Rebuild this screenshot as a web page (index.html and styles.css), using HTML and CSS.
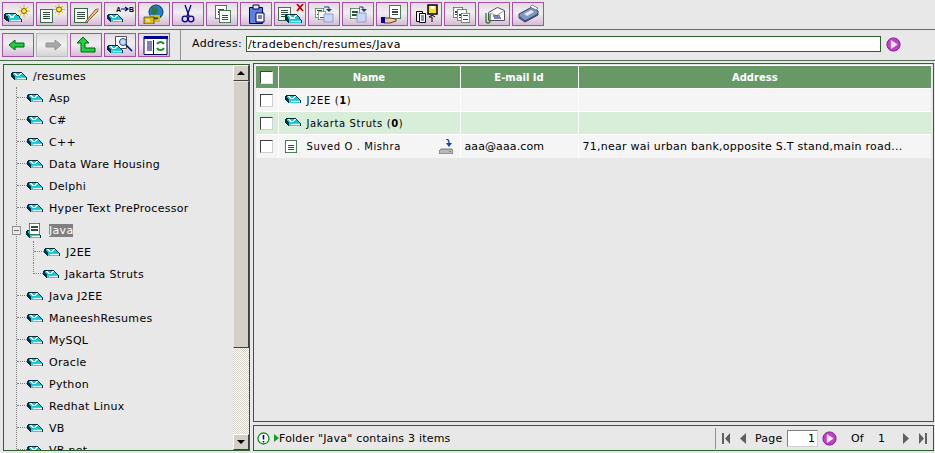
FILE: index.html
```html
<!DOCTYPE html>
<html lang="en">
<head>
    <meta charset="UTF-8">
    <title>Resumes - Java</title>
    <link rel="stylesheet" href="styles.css">
</head>
<body>
    <svg class="defs" width="0" height="0">
        <defs>
            <symbol id="tray" viewBox="0 0 16 10" shape-rendering="crispEdges">
                <path d="M1 1h10v1h1v1h1v1h1v1h1v1h1v3H4V9H3V8H2V7H1V6H0V2h1z" fill="#00303c"/>
                <path d="M2 2h9v1h1v1h1v1h1v1H4V5H3V4H2z" fill="#15c4da"/>
                <path d="M3 2h2v1h1v1h2V3h1V2h2v1h-1v1H9v1H5V4H4V3H3z" fill="#eaffff"/>
                <path d="M4 6h11v3H4z" fill="#2fd0e2"/>
                <path d="M6 7h9v1H6z" fill="#eaffff"/>
            </symbol>
            <symbol id="doc" viewBox="0 0 14 15" shape-rendering="crispEdges">
                <path d="M.5.5h13v14H.5z" fill="#fff" stroke="#2f6b3a"/>
                <path d="M3 4h8v1H3zM3 6h8v1H3zM3 8h8v1H3zM3 10h8v1H3z" fill="#2f4f3a"/>
            </symbol>
            <symbol id="go" viewBox="0 0 15 15">
                <circle cx="7.5" cy="7.5" r="6.6" fill="#c040c8" stroke="#802090"/>
                <path d="M5.2 3.6l6 3.9-6 3.9z" fill="#f4e8f8" stroke="#fff" stroke-width=".6"/>
            </symbol>
        </defs>
    </svg>

    <div class="toolbar">
        <button class="tool"><svg width="28" height="20" viewBox="0 0 28 20"><use href="#tray" x="0" y="8" width="18" height="11"/><path d="M20 1v12M14 7h12M16 3l8 8M24 3l-8 8" stroke="#e8b800"/><circle cx="20" cy="7" r="2.5" fill="#ffe840" stroke="#806000"/></svg></button>
        <button class="tool"><svg width="28" height="20" viewBox="0 0 28 20"><use href="#doc" x="2" y="4" width="13" height="15"/><path d="M21 0v11M15 5.500h12M17 2l8 7M25 2l-8 7" stroke="#e8b800"/><circle cx="21" cy="5.500" r="2.500" fill="#ffe840" stroke="#806000"/></svg></button>
        <button class="tool"><svg width="28" height="20" viewBox="0 0 28 20"><use href="#doc" x="2" y="3" width="14" height="16"/><path d="M14 17l-1 2 2-1 11-11-2-2z" fill="#f8c070" stroke="#806040"/><path d="M24 5l2 2 1-2-1-1z" fill="#e88080"/></svg></button>
        <button class="tool"><svg width="28" height="20" viewBox="0 0 28 20"><use href="#tray" x="0" y="9" width="17" height="10"/><text x="10" y="8" class="ab">A</text><path d="M15 5h6M19 3l3 2-3 2" fill="none" stroke="#000080" stroke-width="1.200"/><text x="23" y="8" class="ab">B</text></svg></button>
        <button class="tool"><svg width="28" height="20" viewBox="0 0 28 20"><circle cx="16" cy="8" r="7" fill="#2080d0" stroke="#103060"/><path d="M12 3l5 1 1 4-4 3-3-2z" fill="#2f7a30"/><path d="M5 14h8v5H5zM11 12h8v5h-8z" fill="none" stroke="#d8c000" stroke-width="1.800"/><path d="M4 13h10v7H4z" fill="none" stroke="#000" stroke-width=".5"/></svg></button>
        <button class="tool"><svg width="28" height="20" viewBox="0 0 28 20"><path d="M11 1l4 11M17 1l-4 11" stroke="#000090" stroke-width="1.300"/><circle cx="11" cy="15" r="2.800" fill="none" stroke="#000090" stroke-width="1.300"/><circle cx="17" cy="15" r="2.800" fill="none" stroke="#000090" stroke-width="1.300"/></svg></button>
        <button class="tool"><svg width="28" height="20" viewBox="0 0 28 20"><use href="#doc" x="7" y="1" width="12" height="14"/><use href="#doc" x="11" y="5" width="12" height="15"/></svg></button>
        <button class="tool"><svg width="28" height="20" viewBox="0 0 28 20"><path d="M7.500 3.500h13v16h-13z" fill="#6080e0" stroke="#000060"/><path d="M11 1h6v4h-6z" fill="#e8e8e8" stroke="#000060"/><path d="M14 9h8v9h-8z" fill="#fff" stroke="#000060"/><path d="M16 12h4M16 14h4" stroke="#000060"/></svg></button>
        <button class="tool"><svg width="28" height="20" viewBox="0 0 28 20"><use href="#doc" x="2" y="2" width="13" height="15"/><path d="M21 0l6 7M27 0l-6 7" stroke="#c00000" stroke-width="1.800"/><use href="#tray" x="9" y="9" width="17" height="11"/></svg></button>
        <button class="tool"><svg width="28" height="20" viewBox="0 0 28 20"><use href="#doc" x="5" y="3" width="9" height="11"/><use href="#doc" x="8" y="6" width="8" height="11"/><path d="M14 10h9v8h-9z" fill="#c8d8f8" stroke="#90a0c8"/><path d="M14 3h5v3" fill="none" stroke="#104080"/><path d="M16 5h6l-3 3z" fill="#104080"/></svg></button>
        <button class="tool"><svg width="28" height="20" viewBox="0 0 28 20"><use href="#doc" x="6" y="3" width="10" height="13"/><path d="M13 9h9v9h-9z" fill="#c8d8f8" stroke="#90a0c8"/><path d="M15 3h4v3" fill="none" stroke="#104080"/><path d="M17 5h6l-3 3z" fill="#104080"/></svg></button>
        <button class="tool"><svg width="28" height="20" viewBox="0 0 28 20"><use href="#doc" x="11" y="1" width="12" height="14"/><path d="M6 14h6l6 1v2l-6 2H6z" fill="#f0c8a0" stroke="#604020"/><path d="M3 13h4v6H3z" fill="#0000a0"/></svg></button>
        <button class="tool"><svg width="28" height="20" viewBox="0 0 28 20"><path d="M4.500 7.500h6v10h-6z" fill="#fff" stroke="#000"/><path d="M7.500 9.500h6v9h-6z" fill="#fff" stroke="#000"/><path d="M9 12h3M9 14h3M9 16h3" stroke="#003090"/><path d="M16 1h9v9h-9z" fill="#f8e000" stroke="#000" stroke-width="1.500"/><path d="M18.500 2h4v3h-4z" fill="#fff"/><path d="M20 18v-5h-3l3-2 3 2" fill="none" stroke="#000"/></svg></button>
        <button class="tool"><svg width="28" height="20" viewBox="0 0 28 20"><use href="#doc" x="7" y="2" width="10" height="12"/><use href="#doc" x="11" y="5" width="10" height="12"/><use href="#doc" x="15" y="8" width="9" height="11"/></svg></button>
        <button class="tool"><svg width="28" height="20" viewBox="0 0 28 20"><path d="M8.500 8.500l9-5 7 3v10h-16z" fill="#fff" stroke="#505050"/><path d="M8.500 8.500l8 3 8-5" fill="none" stroke="#a0a0a0"/><path d="M13 12h7M14 14h7" stroke="#000090"/><path d="M6 9v8a2 2 0 0 0 4 0v-7" fill="none" stroke="#2f7a30" stroke-width="1.300"/></svg></button>
        <button class="tool"><svg width="28" height="20" viewBox="0 0 28 20"><path d="M5 10l13-7 6 4v4l-13 7-6-4z" fill="#8098c0" stroke="#304060"/><path d="M10 10l7-4 3 2-7 4z" fill="#e0e8f8"/><path d="M18 1l6 3-2 2-6-3z" fill="#fff" stroke="#304060" stroke-width=".6"/><path d="M6 13l5 4 13-7" fill="none" stroke="#304060"/></svg></button>
    </div>

    <div class="navbar">
        <div class="nav-buttons">
            <button class="tool"><svg width="28" height="20" viewBox="0 0 28 20"><path d="M5 10l6-5v3h9v4h-9v3z" fill="#20d040" stroke="#006010"/></svg></button>
            <button class="tool disabled"><svg width="28" height="20" viewBox="0 0 28 20"><path d="M23 10l-6-5v3H8v4h9v3z" fill="#a8a8a8" stroke="#909090"/></svg></button>
            <button class="tool"><svg width="28" height="20" viewBox="0 0 28 20"><path d="M11 2l-6 6h4v9h14v-4H13V8h4z" fill="#20d040" stroke="#006010"/></svg></button>
            <button class="tool"><svg width="28" height="20" viewBox="0 0 28 20"><path d="M9.500 1.500h11v12h-11z" fill="#fff" stroke="#505050"/><use href="#tray" x="0" y="9" width="17" height="10"/><circle cx="17" cy="7" r="3.500" fill="#c0e0f8" stroke="#204080"/><path d="M20 10l6 6" stroke="#000090" stroke-width="1.500"/></svg></button>
            <button class="tool"><svg width="28" height="20" viewBox="0 0 28 20"><path d="M4 1.500h23v18H4z" fill="#fff" stroke="#000060"/><path d="M4 1h24v3H4z" fill="#000090"/><path d="M7 7h5M7 9h5M7 11h5M7 13h5M7 15h5" stroke="#000090"/><path d="M13.500 5v14" stroke="#000090"/><path d="M17 9a4 4 0 0 1 7 0M24 13a4 4 0 0 1-7 0" fill="none" stroke="#109020" stroke-width="2"/></svg></button>
        </div>
        <div class="address">
            <label>Address:</label>
            <input class="address-input" type="text" value="/tradebench/resumes/Java">
            <svg class="go" width="15" height="15"><use href="#go"/></svg>
        </div>
    </div>

    <div class="main">
        <div class="tree-panel">
            <div class="tree">
                <div class="row root"><svg class="tray" width="16" height="10"><use href="#tray"/></svg><span>/resumes</span></div>
                <ul>
                    <li><div class="row"><i class="branch"></i><svg class="tray" width="16" height="10"><use href="#tray"/></svg><span>Asp</span></div></li>
                    <li><div class="row"><i class="branch"></i><svg class="tray" width="16" height="10"><use href="#tray"/></svg><span>C#</span></div></li>
                    <li><div class="row"><i class="branch"></i><svg class="tray" width="16" height="10"><use href="#tray"/></svg><span>C++</span></div></li>
                    <li><div class="row"><i class="branch"></i><svg class="tray" width="16" height="10"><use href="#tray"/></svg><span>Data Ware Housing</span></div></li>
                    <li><div class="row"><i class="branch"></i><svg class="tray" width="16" height="10"><use href="#tray"/></svg><span>Delphi</span></div></li>
                    <li><div class="row"><i class="branch"></i><svg class="tray" width="16" height="10"><use href="#tray"/></svg><span>Hyper Text PreProcessor</span></div></li>
                    <li>
                        <div class="row">
                            <i class="expander"></i>
                            <svg class="open-folder" width="16" height="17" viewBox="0 0 16 17"><use href="#tray" x="0" y="7" width="15" height="10"/><use href="#doc" x="3" y="0" width="11" height="13"/></svg>
                            <span class="selected">Java</span>
                        </div>
                        <ul class="sub">
                            <li><div class="row"><i class="branch"></i><svg class="tray" width="16" height="10"><use href="#tray"/></svg><span>J2EE</span></div></li>
                            <li><div class="row"><i class="branch"></i><svg class="tray" width="16" height="10"><use href="#tray"/></svg><span>Jakarta Struts</span></div></li>
                        </ul>
                    </li>
                    <li><div class="row"><i class="branch"></i><svg class="tray" width="16" height="10"><use href="#tray"/></svg><span>Java J2EE</span></div></li>
                    <li><div class="row"><i class="branch"></i><svg class="tray" width="16" height="10"><use href="#tray"/></svg><span>ManeeshResumes</span></div></li>
                    <li><div class="row"><i class="branch"></i><svg class="tray" width="16" height="10"><use href="#tray"/></svg><span>MySQL</span></div></li>
                    <li><div class="row"><i class="branch"></i><svg class="tray" width="16" height="10"><use href="#tray"/></svg><span>Oracle</span></div></li>
                    <li><div class="row"><i class="branch"></i><svg class="tray" width="16" height="10"><use href="#tray"/></svg><span>Python</span></div></li>
                    <li><div class="row"><i class="branch"></i><svg class="tray" width="16" height="10"><use href="#tray"/></svg><span>Redhat Linux</span></div></li>
                    <li><div class="row"><i class="branch"></i><svg class="tray" width="16" height="10"><use href="#tray"/></svg><span>VB</span></div></li>
                    <li><div class="row"><i class="branch"></i><svg class="tray" width="16" height="10"><use href="#tray"/></svg><span>VB.net</span></div></li>
                </ul>
            </div>
            <div class="scrollbar">
                <div class="scroll-btn"><i class="arrow-up"></i></div>
                <div class="scroll-thumb"></div>
                <div class="scroll-track"></div>
                <div class="scroll-btn"><i class="arrow-down"></i></div>
            </div>
        </div>

        <div class="content">
            <div class="grid-panel">
                <table class="grid">
                    <thead>
                        <tr>
                            <th class="col-check"><i class="check head-check"></i></th>
                            <th class="col-name">Name</th>
                            <th class="col-mail">E-mail Id</th>
                            <th>Address</th>
                        </tr>
                    </thead>
                    <tbody>
                        <tr>
                            <td class="col-check"><i class="check"></i></td>
                            <td class="name-cell mono"><svg class="tray" width="16" height="10"><use href="#tray"/></svg>J2EE (<b>1</b>)</td>
                            <td></td>
                            <td></td>
                        </tr>
                        <tr class="alt">
                            <td class="col-check"><i class="check"></i></td>
                            <td class="name-cell mono"><svg class="tray" width="16" height="10"><use href="#tray"/></svg>Jakarta Struts (<b>0</b>)</td>
                            <td></td>
                            <td></td>
                        </tr>
                        <tr>
                            <td class="col-check"><i class="check"></i></td>
                            <td class="name-cell mono">
                                <div class="resume-name">
                                    <svg class="resume-doc" width="12" height="13"><use href="#doc"/></svg>
                                    <span>Suved O . Mishra</span>
                                    <svg class="download" width="14" height="15" viewBox="0 0 14 15"><path d="M7 0c2 0 3 1 3 4" fill="none" stroke="#1040c0" stroke-width="1.300"/><path d="M7 4h6l-3 4z" fill="#1040c0"/><path d="M2 10h11l1 2v3H0v-3z" fill="#b8b8b8" stroke="#505050" stroke-width=".7"/><path d="M10 12h2v1h-2z" fill="#20c040"/></svg>
                                </div>
                            </td>
                            <td class="mail-cell">aaa@aaa.com</td>
                            <td class="addr-cell">71,near wai urban bank,opposite S.T stand,main road...</td>
                        </tr>
                    </tbody>
                </table>
            </div>
            <div class="status-panel">
                <div class="status-message">
                    <svg width="13" height="13" viewBox="0 0 13 13"><circle cx="6.500" cy="6.500" r="5.500" fill="#fff" stroke="#109020" stroke-width="1.300"/><path d="M6.500 3v4.500M6.500 9v1.500" stroke="#000090" stroke-width="1.600"/></svg>
                    <i class="status-arrow"></i>
                    <span>Folder "Java" contains 3 items</span>
                </div>
                <div class="pager">
                    <svg class="pg-icon first" width="9" height="11" viewBox="0 0 9 11"><path d="M0 0h2v11H0zM8 0v11L3 5.500z" fill="#606060"/></svg>
                    <svg class="pg-icon prev" width="6" height="11" viewBox="0 0 6 11"><path d="M6 0v11L0 5.500z" fill="#606060"/></svg>
                    <span class="pg-label">Page</span>
                    <input class="page-input" type="text" value="1">
                    <svg class="go" width="15" height="15"><use href="#go"/></svg>
                    <span class="pg-of">Of</span>
                    <span class="pg-total">1</span>
                    <svg class="pg-icon next" width="6" height="11" viewBox="0 0 6 11"><path d="M0 0v11l6-5.500z" fill="#606060"/></svg>
                    <svg class="pg-icon last" width="9" height="11" viewBox="0 0 9 11"><path d="M7 0h2v11H7zM1 0v11l5-5.500z" fill="#606060"/></svg>
                </div>
            </div>
        </div>
    </div>
</body>
</html>
```

FILE: styles.css
```css
:root {
    --bg: #e8e8e8;
    --green: #2f5f2f;
    --header: #669966;
    --purple: #a850a8;
}

* {
    box-sizing: border-box;
    margin: 0;
    padding: 0;
}

html, body {
    height: 453px;
    overflow: hidden;
}

body {
    background: var(--bg);
    font-family: 'DejaVu Sans', Verdana, sans-serif;
    font-size: 11px;
    letter-spacing: .3px;
    color: #000;
    display: flex;
    flex-direction: column;
}

.defs {
    display: block;
    height: 0;
}

.toolbar {
    height: 30px;
    display: flex;
    gap: 2px;
    padding: 2px 2px 0;
    border-bottom: 1px solid #5f6f5f;
}

.tool {
    width: 32px;
    height: 24px;
    flex: none;
    display: flex;
    align-items: center;
    justify-content: center;
    border: 1px solid var(--purple);
    background: linear-gradient(#e4dce4 0%, #f0eef0 45%, #d8bcd8 100%);
}

.tool.disabled {
    border-color: #b8b8b8;
    background: linear-gradient(#e0e0e0, #f0f0f0 50%, #d4d4d4);
}

.ab {
    font-size: 7px;
    font-weight: bold;
    fill: #000;
}

.navbar {
    height: 31px;
    display: flex;
    border-bottom: 1px solid #4f6f4f;
}

.nav-buttons {
    width: 181px;
    display: flex;
    gap: 2px;
    padding: 3px 2px 0;
    border-right: 1px solid #909090;
}

.address {
    flex: 1;
    display: flex;
    align-items: flex-start;
    padding: 6px 0 0 11px;
}

.address label {
    width: 54px;
    line-height: 16px;
}

.address-input {
    width: 635px;
    height: 16px;
    border: 1px solid var(--green);
    background: #fff;
    padding: 0 1px;
    font: 11px 'DejaVu Sans', Verdana, sans-serif;
    letter-spacing: .35px;
    outline: none;
}

.go {
    display: block;
    flex: none;
}

.address .go {
    margin: 1px 0 0 5px;
}

.main {
    flex: 1;
    min-height: 0;
    display: flex;
    gap: 3px;
    padding: 2px 1px 2px 3px;
}

.tree-panel {
    width: 247px;
    margin-top: 1px;
    flex: none;
    display: flex;
    border: 1px solid var(--green);
    overflow: hidden;
}

.tree {
    flex: 1;
    overflow: hidden;
    padding-left: 7px;
}

.tree ul {
    list-style: none;
    margin-left: 5px;
    border-left: 1px dotted #808080;
}

.row {
    height: 22px;
    display: flex;
    align-items: center;
    white-space: nowrap;
}

.branch {
    width: 10px;
    height: 11px;
    align-self: flex-start;
    border-bottom: 1px dotted #808080;
    flex: none;
}

.tray {
    display: block;
    flex: none;
}

.row .tray {
    margin-right: 6px;
}

.expander {
    width: 9px;
    height: 9px;
    margin: 0 3px 0 -5px;
    flex: none;
    border: 1px solid #909090;
    background: linear-gradient(#707070, #707070) center / 5px 1px no-repeat, var(--bg);
}

.open-folder {
    margin: 0 7px 0 2px;
    flex: none;
}

.selected {
    background: #808080;
    color: #fff;
}

.tree ul.sub {
    margin-left: 16px;
    border-left: none;
}

.sub li {
    border-left: 1px dotted #808080;
}

.sub li:last-child {
    border-left: none;
}

.sub li:last-child .branch {
    border-left: 1px dotted #808080;
}

.scrollbar {
    width: 16px;
    flex: none;
    display: flex;
    flex-direction: column;
}

.scroll-btn {
    height: 16px;
    flex: none;
    display: flex;
    align-items: center;
    justify-content: center;
    background: #d4d0c8;
    border: 1px solid;
    border-color: #fff #404040 #404040 #fff;
}

.arrow-up, .arrow-down {
    border-left: 4px solid transparent;
    border-right: 4px solid transparent;
}

.arrow-up {
    border-bottom: 4px solid #000;
}

.arrow-down {
    border-top: 4px solid #000;
}

.scroll-thumb {
    height: 267px;
    flex: none;
    background: #d4d0c8;
    border: 1px solid;
    border-color: #e8e8e8 #404040 #404040 #e8e8e8;
}

.scroll-track {
    flex: 1;
    background: repeating-conic-gradient(#d4d0c8 0 25%, #fff 0 50%) 0 0 / 2px 2px;
}

.content {
    flex: 1;
    min-width: 0;
    display: flex;
    flex-direction: column;
    gap: 3px;
}

.grid-panel {
    flex: 1;
    min-height: 0;
    border: 1px solid var(--green);
    padding: 1px 2px;
}

.grid {
    width: 100%;
    table-layout: fixed;
    border-collapse: collapse;
}

.grid th {
    height: 23px;
    background: var(--header);
    color: #fff;
    font-size: 10px;
    font-weight: bold;
    letter-spacing: 0;
    border-left: 1px solid #fff;
    border-top: 1px solid #fff;
}

.grid th:first-child, .grid td:first-child {
    border-left: none;
}

.grid td {
    height: 23px;
    background: #f5f5f5;
    border-left: 1px solid #fff;
    border-top: 1px solid #fff;
    padding-left: 3px;
    white-space: nowrap;
    overflow: hidden;
}

.grid tr.alt td {
    background: #d8eed8;
}

.col-check {
    width: 22px;
    text-align: center;
}

.grid td.col-check {
    padding-left: 0;
}

.col-name {
    width: 182px;
}

.col-mail {
    width: 118px;
}

.check {
    display: block;
    width: 13px;
    height: 13px;
    margin: 0 auto;
    background: #fff;
    border: 1px solid;
    border-color: #404040 #d0d0d0 #d0d0d0 #404040;
}

.head-check {
    border-color: #404040 #e8e8e8 #e8e8e8 #404040;
}

.grid .mono {
    letter-spacing: .6px;
    font-size: 10px;
}

.grid .mail-cell {
    padding-left: 4px;
    letter-spacing: .1px;
}

.grid .addr-cell {
    padding-left: 4px;
    letter-spacing: .25px;
}

.grid .name-cell {
    padding-left: 6px;
}

.name-cell .tray {
    display: inline-block;
    vertical-align: 0;
    margin-right: 6px;
}

.resume-name {
    display: flex;
    align-items: center;
}

.resume-doc {
    margin-right: 10px;
    flex: none;
}

.download {
    margin-left: auto;
    margin-right: 7px;
    flex: none;
}

.status-panel {
    height: 26px;
    flex: none;
    display: flex;
    align-items: center;
    justify-content: space-between;
    border: 1px solid var(--green);
    letter-spacing: .2px;
}

.status-message {
    display: flex;
    align-items: center;
    padding-left: 3px;
}

.status-arrow {
    margin-left: 4px;
    border-left: 5px solid #10a020;
    border-top: 4px solid transparent;
    border-bottom: 4px solid transparent;
}

.pager {
    width: 218px;
    height: 21px;
    display: flex;
    align-items: center;
    border-left: 1px solid #909090;
}

.pg-icon {
    display: block;
    flex: none;
}

.first {
    margin-left: 6px;
}

.prev {
    margin-left: 9px;
}

.pg-label {
    margin-left: 9px;
    width: 32px;
}

.page-input {
    width: 31px;
    height: 17px;
    border: 1px solid #808080;
    border-right-color: #d0d0d0;
    border-bottom-color: #d0d0d0;
    background: #fff;
    text-align: right;
    padding-right: 2px;
    font: 11px 'DejaVu Sans', Verdana, sans-serif;
    outline: none;
}

.pager .go {
    margin-left: 4px;
}

.pg-of {
    margin-left: 14px;
    width: 27px;
}

.pg-total {
    width: 25px;
}

.last {
    margin-left: 9px;
}
```
